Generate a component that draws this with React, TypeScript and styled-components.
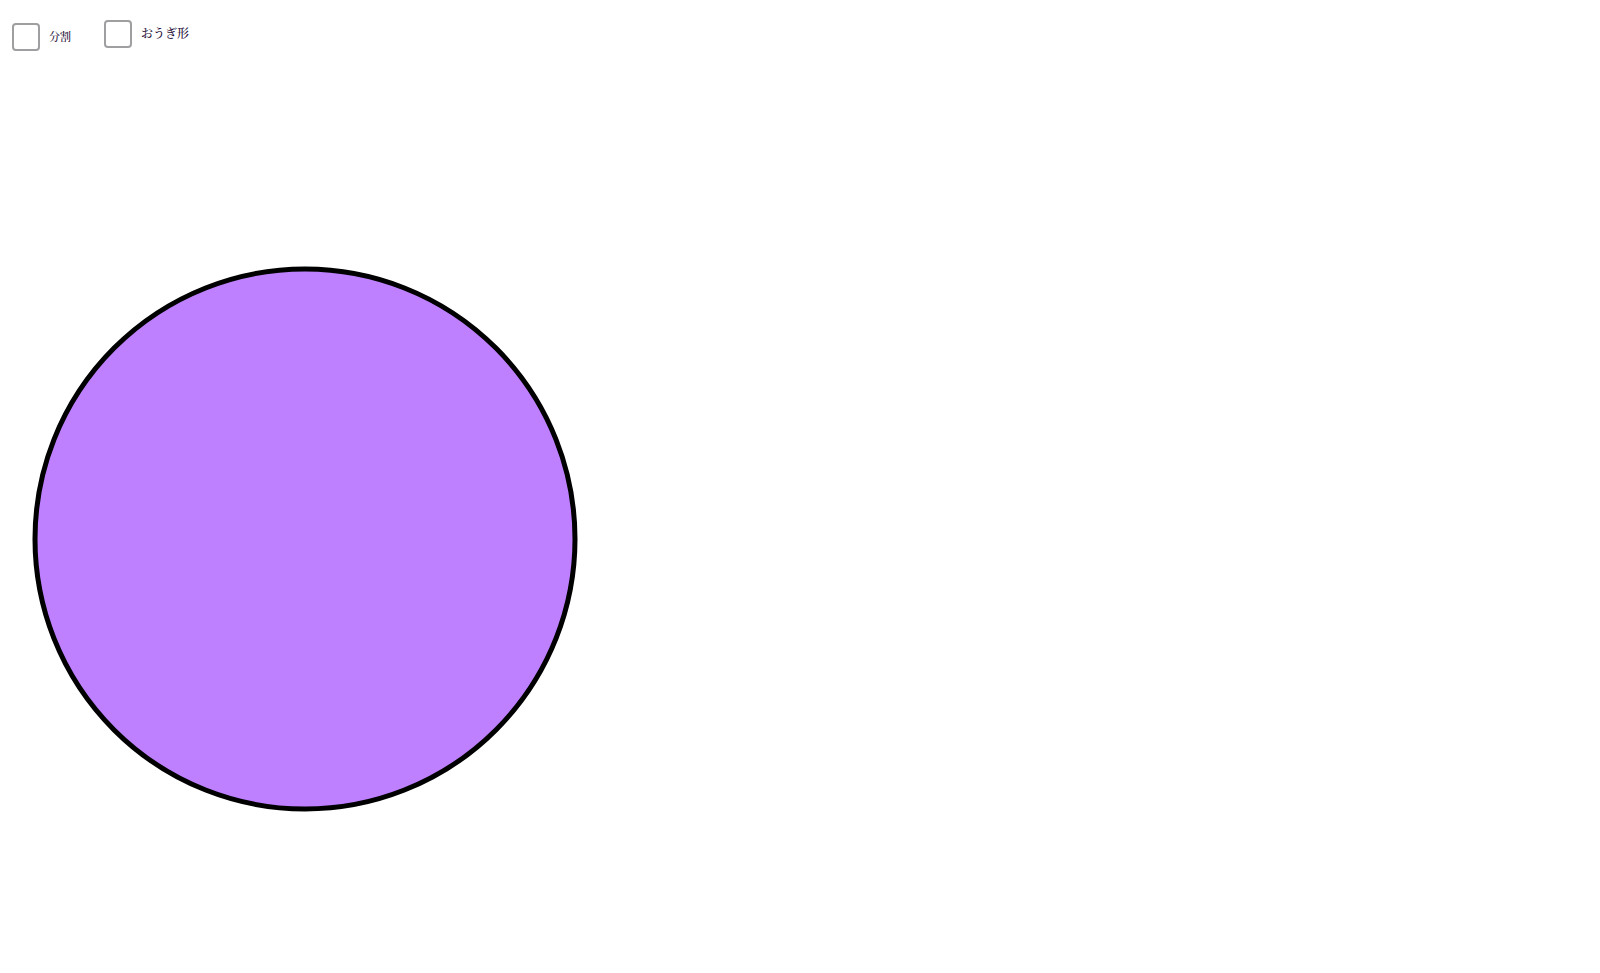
import React, { useState } from "react";
import styled, { createGlobalStyle } from "styled-components";

const GlobalStyle = createGlobalStyle`
  body {
    margin: 0;
    background: #ffffff;
    color: #1a0a33;
    font-family: "Noto Serif CJK JP", "Noto Sans CJK JP", serif;
  }
`;

const Page = styled.main`
  display: flex;
  flex-direction: column;
`;

const Toolbar = styled.header`
  display: flex;
  align-items: flex-start;
  gap: 33px;
  padding: 20px 12px;
`;

const Option = styled.label<{ $height: number }>`
  display: flex;
  align-items: center;
  gap: 9px;
  height: ${({ $height }) => $height}px;
  cursor: pointer;
`;

const OptionText = styled.span<{ $size: number }>`
  font-size: ${({ $size }) => $size}px;
  font-weight: 500;
  line-height: 16px;
  padding-bottom: 2px;
`;

const Checkbox = styled.input`
  appearance: none;
  box-sizing: border-box;
  width: 28px;
  height: 28px;
  margin: 0;
  border: 2px solid #9f9fa1;
  border-radius: 4px;
  background: #ffffff;

  &:checked {
    background: #bf80ff;
  }
`;

const Stage = styled.section`
  padding: 192px 32px 0;
`;

const Figure = styled.svg`
  display: block;
  width: 546px;
  max-width: 100%;
`;

const CENTER = 273;
const RADIUS = 270;

const App: React.FC = () => {
  const [divided, setDivided] = useState(false);
  const [sector, setSector] = useState(false);

  return (
    <Page>
      <GlobalStyle />
      <Toolbar>
        <Option $height={34}>
          <Checkbox
            type="checkbox"
            checked={divided}
            onChange={(e) => setDivided(e.target.checked)}
          />
          <OptionText $size={11}>分割</OptionText>
        </Option>
        <Option $height={28}>
          <Checkbox
            type="checkbox"
            checked={sector}
            onChange={(e) => setSector(e.target.checked)}
          />
          <OptionText $size={12}>おうぎ形</OptionText>
        </Option>
      </Toolbar>
      <Stage>
        <Figure viewBox="0 0 546 546" role="img" aria-label="円">
          <circle
            cx={CENTER}
            cy={CENTER}
            r={RADIUS}
            fill="#bf80ff"
            stroke="#000000"
            strokeWidth={5}
          />
          {divided && (
            <path
              d={`M${CENTER} 3V543M3 ${CENTER}H543`}
              stroke="#000000"
              strokeWidth={5}
            />
          )}
          {sector && (
            <path
              d={`M${CENTER} ${CENTER}V3A${RADIUS} ${RADIUS} 0 0 1 543 ${CENTER}Z`}
              fill="#ffffff"
              stroke="#000000"
              strokeWidth={5}
            />
          )}
        </Figure>
      </Stage>
    </Page>
  );
};

export default App;
